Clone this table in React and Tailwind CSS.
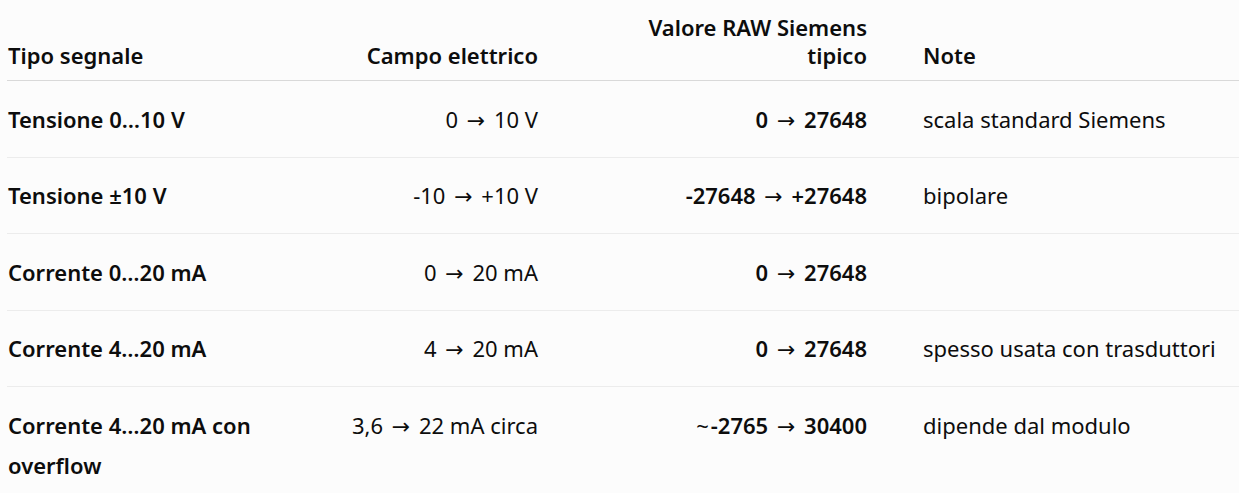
import React from "react";

const Arrow = () => (
  <span className="mx-[3px] font-normal leading-[0]" style={{ fontFamily: '"DejaVu Sans", sans-serif' }}>
    →
  </span>
);

const rows = [
  { a: "Tensione 0…10 V", b: <>0 <Arrow /> 10 V</>, c: <>0 <Arrow /> 27648</>, d: "scala standard Siemens" },
  { a: "Tensione ±10 V", b: <>-10 <Arrow /> +10 V</>, c: <>-27648 <Arrow /> +27648</>, d: "bipolare" },
  { a: "Corrente 0…20 mA", b: <>0 <Arrow /> 20 mA</>, c: <>0 <Arrow /> 27648</>, d: "" },
  { a: "Corrente 4…20 mA", b: <>4 <Arrow /> 20 mA</>, c: <>0 <Arrow /> 27648</>, d: "spesso usata con trasduttori" },
  {
    a: "Corrente 4…20 mA con overflow",
    b: <>3,6 <Arrow /> 22 mA circa</>,
    c: (
      <>
        <span className="mr-[2px] font-normal">~</span>-2765 <Arrow /> 30400
      </>
    ),
    d: "dipende dal modulo",
  },
];

export default function App() {
  return (
    <div
      className="h-[493px] w-[1239px] overflow-hidden bg-[#fcfcfc] text-[#0d0d0d]"
      style={{ fontFamily: '"Noto Sans", "Open Sans", sans-serif' }}
    >
      <table className="ml-[7px] w-[1290px] table-fixed border-collapse text-[22px]">
        <colgroup>
          <col className="w-[280px]" />
          <col className="w-[279px]" />
          <col className="w-[329px]" />
          <col />
        </colgroup>
        <thead>
          <tr className="border-b border-[#d9d9d9]">
            <th className="pl-px pr-7 pb-[11px] pt-[13px] text-left align-bottom font-semibold leading-[28px]">
              Tipo segnale
            </th>
            <th className="px-7 pb-[11px] pt-[13px] text-right align-bottom font-semibold leading-[28px]">
              Campo elettrico
            </th>
            <th className="px-7 pb-[11px] pt-[13px] text-right align-bottom font-semibold leading-[28px]">
              Valore RAW Siemens tipico
            </th>
            <th className="px-7 pb-[11px] pt-[13px] text-left align-bottom font-semibold leading-[28px]">
              Note
            </th>
          </tr>
        </thead>
        <tbody>
          {rows.map((r, i) => (
            <tr key={i} className={i < rows.length - 1 ? "border-b border-[#ececec]" : ""}>
              <td className="pl-px pr-7 py-[17.75px] text-left align-top font-semibold leading-[40px]">
                {r.a}
              </td>
              <td className="px-7 py-[17.75px] text-right align-top leading-[40px]">{r.b}</td>
              <td className="px-7 py-[17.75px] text-right align-top font-semibold leading-[40px]">
                {r.c}
              </td>
              <td className="px-7 py-[17.75px] text-left align-top leading-[40px]">{r.d}</td>
            </tr>
          ))}
        </tbody>
      </table>
    </div>
  );
}
